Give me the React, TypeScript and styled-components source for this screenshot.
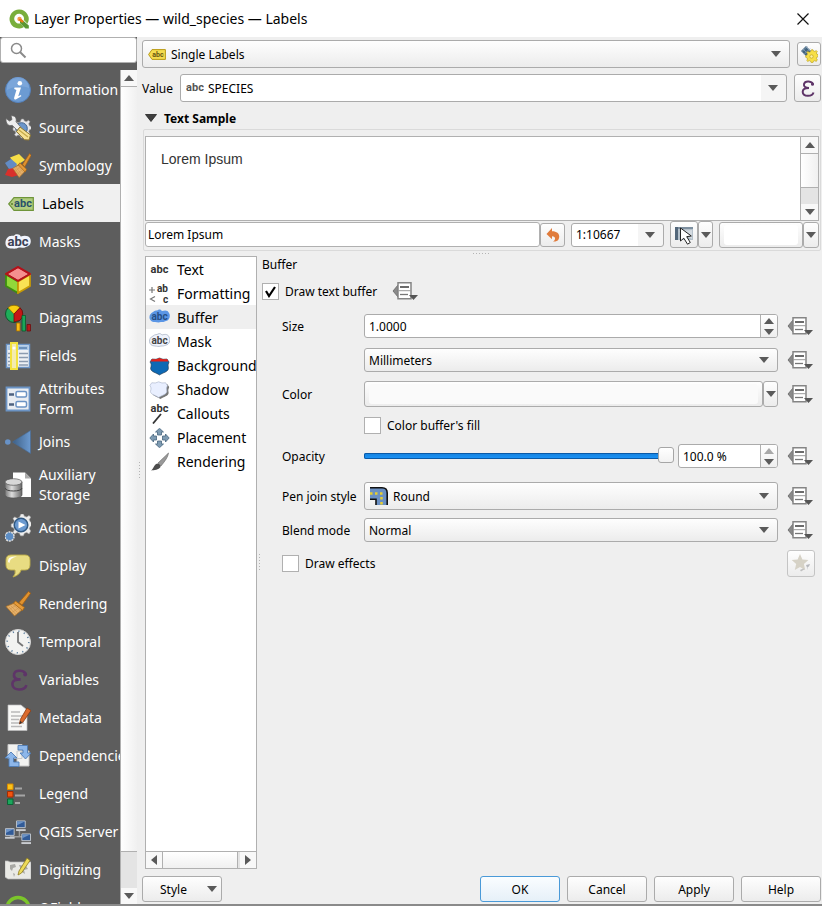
import React from "react";
import styled, { createGlobalStyle, css } from "styled-components";

const SEGOE = '"Segoe UI", "Noto Sans", "Open Sans", sans-serif';
const TAHOMA = 'Tahoma, "Noto Sans", "DejaVu Sans", sans-serif';
const LINE = "#b0b0b0";

const GlobalStyle = createGlobalStyle`
  *, *::before, *::after { box-sizing: border-box; }
  body { margin: 0; background: #efefef; font-family: ${TAHOMA}; font-size: 12px; color: #000; }
  button, input, select, textarea { font: inherit; color: inherit; margin: 0; }
  svg { display: block; flex: none; }
`;

/* ---------- surfaces ---------- */

const Window = styled.div`
  display: flex;
  flex-direction: column;
  height: 100vh;
  min-height: 640px;
  overflow: hidden;
  background: #efefef;
  border-bottom: 2px solid #8a8a8a;
`;

const TitleBar = styled.header`
  display: flex;
  align-items: center;
  gap: 5px;
  flex: none;
  height: 37px;
  padding: 0 10px 0 9px;
  background: #fff;
`;

const Title = styled.h1`
  flex: 1;
  margin: 0;
  font: 400 14px/20px ${SEGOE};
`;

const CloseButton = styled.button`
  display: flex;
  padding: 2px;
  border: 0;
  background: transparent;
`;

const Body = styled.div`
  display: grid;
  grid-template-columns: 137px 5px minmax(0, 1fr);
  flex: 1;
  min-height: 0;
`;

/* ---------- side bar ---------- */

const SideBar = styled.aside`
  display: flex;
  flex-direction: column;
  min-height: 0;
  background: #5d5d5d;
`;

const SearchBox = styled.label`
  display: flex;
  align-items: center;
  gap: 6px;
  flex: none;
  height: 26px;
  margin-bottom: 7px;
  padding-left: 9px;
  border: 1px solid ${LINE};
  border-radius: 3px;
  background: #fff;
`;

const SearchInput = styled.input`
  width: 100%;
  min-width: 0;
  padding: 0;
  border: 0;
  outline: 0;
  background: transparent;
`;

const SideBody = styled.div`
  display: grid;
  grid-template-columns: minmax(0, 1fr) 17px;
  flex: 1;
  min-height: 0;
`;

const SideList = styled.nav`
  overflow: hidden;
`;

const SideItem = styled.button<{ $active?: boolean; $tall?: boolean }>`
  display: flex;
  align-items: center;
  gap: 8px;
  width: 100%;
  height: ${(p) => (p.$tall ? 48 : 38)}px;
  padding: 1px 0 0 ${(p) => (p.$active ? 8 : 5)}px;
  border: 0;
  overflow: hidden;
  text-align: left;
  font: 400 14px/20px ${SEGOE};
  white-space: ${(p) => (p.$tall ? "normal" : "nowrap")};
  color: ${(p) => (p.$active ? "#000" : "#fff")};
  background: ${(p) => (p.$active ? "#f0f0f0" : "transparent")};
`;

/* ---------- scroll bars ---------- */

const ScrollV = styled.div`
  display: flex;
  flex-direction: column;
  min-height: 0;
  border-left: 1px solid ${LINE};
  background: #e4e4e4;
`;

const ScrollH = styled.div`
  display: flex;
  flex: none;
  height: 17px;
  border-top: 1px solid ${LINE};
  background: #e4e4e4;
`;

const ScrollButton = styled.button<{ $dir: "v" | "h" }>`
  display: grid;
  place-items: center;
  flex: none;
  width: ${(p) => (p.$dir === "h" ? "16px" : "100%")};
  height: 16px;
  padding: 0;
  border: 0;
  background: #f8f8f8;
`;

const HandleV = styled.div<{ $groove: number }>`
  flex: 1;
  margin-bottom: ${(p) => p.$groove}px;
  border: solid ${LINE};
  border-width: 1px 0;
  background: linear-gradient(90deg, #fff, #f0f0f0);
  box-shadow: 0 ${(p) => p.$groove}px 0 #e4e4e4, 0 ${(p) => p.$groove + 1}px 0 ${LINE};
`;

const HandleH = styled.div`
  flex: 1;
  margin-right: 2px;
  border: solid ${LINE};
  border-width: 0 1px;
  background: linear-gradient(#fff, #f0f0f0);
  box-shadow: 2px 0 0 #e4e4e4, 3px 0 0 ${LINE};
`;

/* ---------- generic controls ---------- */

const raised = css`
  border: 1px solid #ababab;
  border-radius: 3px;
  background: linear-gradient(#fefefe, #ececec);
`;

const ToolButton = styled.button<{ $w: number; $h: number; $faded?: boolean }>`
  ${raised}
  display: grid;
  place-items: center;
  flex: none;
  width: ${(p) => p.$w}px;
  height: ${(p) => p.$h}px;
  padding: 0;
  ${(p) => p.$faded && "border-color: #c4c4c4;"}
`;

const FlatButton = styled.button`
  display: flex;
  flex: none;
  padding: 0;
  border: 0;
  background: transparent;
`;

const PushButton = styled.button<{ $primary?: boolean }>`
  ${raised}
  display: flex;
  align-items: center;
  justify-content: center;
  width: 80px;
  height: 26px;
  padding: 0;
  ${(p) => p.$primary && "border-color: #4a9ad8; background: linear-gradient(#fafdff, #e6f0f8);"}
`;

const StyleButton = styled(PushButton)`
  justify-content: space-between;
  padding: 0 4px 0 17px;
`;

const ComboFrame = styled.div<{ $h: number; $editable?: boolean; $w?: number }>`
  ${raised}
  display: grid;
  grid-template-columns: auto minmax(0, 1fr) 27px;
  align-items: center;
  flex: ${(p) => (p.$w ? "none" : "1")};
  width: ${(p) => (p.$w ? p.$w + "px" : "auto")};
  min-width: 0;
  height: ${(p) => p.$h}px;
  ${(p) => p.$editable && "background: linear-gradient(90deg, #fff calc(100% - 25px), #f5f5f5 calc(100% - 25px));"}

  & > svg { grid-row: 1; pointer-events: none; }
  & > svg:first-child { grid-column: 1; margin-left: 5px; }
  & > svg:last-child { grid-column: 3; justify-self: center; }
`;

const ComboSelect = styled.select<{ $pad: number }>`
  grid-row: 1;
  grid-column: 1 / -1;
  appearance: none;
  width: 100%;
  height: 100%;
  padding: 0 27px 0 ${(p) => p.$pad}px;
  border: 0;
  outline: 0;
  background: transparent;
`;

const SpinFrame = styled.div<{ $w?: number }>`
  display: flex;
  flex: ${(p) => (p.$w ? "none" : "1")};
  width: ${(p) => (p.$w ? p.$w + "px" : "auto")};
  min-width: 0;
  height: 24px;
  border: 1px solid #ababab;
  border-radius: 3px;
  background: #fff;
  overflow: hidden;
`;

const SpinInput = styled.input`
  flex: 1;
  width: 0;
  min-width: 0;
  padding: 0 4px;
  border: 0;
  outline: 0;
  background: transparent;
`;

const SpinButtons = styled.div`
  display: flex;
  flex-direction: column;
  width: 17px;
  border-left: 1px solid ${LINE};
  background: linear-gradient(#fff, #eee);
`;

const SpinButton = styled.button`
  display: grid;
  place-items: center;
  flex: 1;
  padding: 0;
  border: 0;
  background: transparent;
`;

const ColorButton = styled.button<{ $w?: number; $h: number; $swatch: string }>`
  ${raised}
  flex: ${(p) => (p.$w ? "none" : "1")};
  width: ${(p) => (p.$w ? p.$w + "px" : "auto")};
  min-width: 0;
  height: ${(p) => p.$h}px;
  padding: 2px 4px;

  &::before {
    content: "";
    display: block;
    height: 100%;
    border-radius: 3px;
    background: ${(p) => p.$swatch};
  }
`;

const TickLabel = styled.label`
  display: flex;
  align-items: center;
  gap: 6px;
`;

const Tick = styled.span`
  display: grid;
  width: 17px;
  height: 17px;
  border: 1px solid ${LINE};
  background: #fff;

  & > * { grid-area: 1 / 1; place-self: center; }
  & > svg { pointer-events: none; visibility: hidden; }
  & > input:checked + svg { visibility: visible; }
`;

const TickInput = styled.input`
  appearance: none;
  width: 15px;
  height: 15px;
`;

const Slider = styled.input`
  appearance: none;
  flex: 1;
  min-width: 0;
  height: 18px;
  margin: 0;
  background: transparent;

  &::-webkit-slider-runnable-track {
    height: 6px;
    border-radius: 2px;
    background: linear-gradient(#1580dc, #1b95fa);
    box-shadow: inset 0 0 0 1px #0a5aa8;
  }
  &::-webkit-slider-thumb {
    appearance: none;
    width: 16px;
    height: 16px;
    margin-top: -6px;
    border: 1px solid #a6a6a6;
    border-radius: 3px;
    background: linear-gradient(#fff, #f2f2f2);
  }
`;

/* ---------- main column ---------- */

const Main = styled.main`
  display: flex;
  flex-direction: column;
  min-width: 0;
  min-height: 0;
  padding: 3px 1px 2px 0;
`;

const TopRow = styled.div`
  display: flex;
  align-items: center;
  gap: 7px;
  flex: none;
  margin-bottom: 6px;
`;

const ValueLabel = styled.label`
  flex: none;
  width: 31px;
`;

const SectionHead = styled.button`
  display: flex;
  align-items: center;
  gap: 7px;
  flex: none;
  height: 20px;
  padding: 0 0 0 3px;
  border: 0;
  background: transparent;
  font-weight: 700;
`;

const SampleGroup = styled.section`
  flex: none;
  margin: 1px 0 0 1px;
  padding: 6px 1px 2px 1px;
  border: 1px solid #dadada;
  border-radius: 2px;
`;

const Preview = styled.div`
  display: grid;
  grid-template-columns: minmax(0, 1fr) 18px;
  height: 85px;
  border: 1px solid ${LINE};
  background: #fff;
`;

const PreviewText = styled.p`
  margin: 0;
  padding: 12px 15px;
  font: 400 14px/20px "Liberation Sans", Arial, sans-serif;
  color: #333;
`;

const SampleRow = styled.div`
  display: flex;
  align-items: center;
  height: 27px;
`;

const SampleInput = styled.input`
  flex: 1;
  min-width: 0;
  height: 25px;
  padding: 0 2px;
  border: 1px solid ${LINE};
  border-radius: 3px;
  background: #fff;
  outline: 0;
`;

const Spacer = styled.span`
  flex: none;
  width: 6px;
`;

const DotsH = styled.div`
  align-self: center;
  flex: none;
  width: 17px;
  height: 1px;
  margin: 2px 0;
  background: repeating-linear-gradient(90deg, #b4b4b4 0 1px, transparent 1px 3px);
`;

const DotsV = styled.div`
  align-self: center;
  justify-self: center;
  width: 1px;
  height: 17px;
  background: repeating-linear-gradient(#b4b4b4 0 1px, transparent 1px 3px);
`;

const Split = styled.div`
  display: grid;
  grid-template-columns: 112px 5px minmax(0, 1fr);
  flex: 1;
  min-height: 0;
  margin-left: 3px;
`;

const TabPanel = styled.div`
  display: flex;
  flex-direction: column;
  min-height: 0;
  border: 1px solid ${LINE};
  background: #fff;
`;

const TabList = styled.nav`
  flex: 1;
  min-height: 0;
  overflow: hidden;
`;

const TabItem = styled.button<{ $active?: boolean }>`
  display: flex;
  align-items: center;
  gap: 7px;
  width: 100%;
  height: 24px;
  padding: 1px 0 0 3px;
  border: 0;
  overflow: hidden;
  white-space: nowrap;
  font: 400 14px/20px ${SEGOE};
  background: ${(p) => (p.$active ? "#efefef" : "transparent")};
`;

const Settings = styled.section`
  min-width: 0;
  padding-right: 3px;
`;

const SettingsTitle = styled.h2`
  margin: 0;
  font: 400 12px/17px ${TAHOMA};
`;

const EnableRow = styled.div`
  display: flex;
  align-items: center;
  gap: 15px;
  height: 36px;
`;

const Form = styled.div`
  display: grid;
  grid-template-columns: 82px minmax(0, 1fr) 31px;
  grid-template-rows: 34px 34px 34px 28px 34px 46px 22px 44px;
  align-items: center;
  padding-left: 20px;
`;

const FormLabel = styled.label`
  grid-column: 1;
  white-space: nowrap;
`;

const Field = styled.div`
  grid-column: 2;
  display: flex;
  align-items: center;
  gap: 4px;
  min-width: 0;
  padding-right: 9px;
`;

const ColorField = styled(Field)`
  gap: 0;
`;

const Across = styled.div`
  grid-column: 1 / 3;
`;

const Footer = styled.footer`
  display: flex;
  justify-content: space-between;
  flex: none;
  margin-top: 7px;
`;

const Actions = styled.div`
  display: flex;
  gap: 7px;
`;

/* ---------- small drawings ---------- */

type Dir = "up" | "down" | "left" | "right";
const arrowPaths: Record<Dir, string> = {
  up: "M0 6 5 0l5 6z",
  down: "M0 0h10L5 6z",
  left: "M6 0v10L0 5z",
  right: "M0 0v10l6-5z",
};
const Arrow = ({ dir = "down", faded }: { dir?: Dir; faded?: boolean }) => {
  const flat = dir === "up" || dir === "down";
  return (
    <svg width={flat ? 10 : 6} height={flat ? 6 : 10} aria-hidden>
      <path d={arrowPaths[dir]} fill={faded ? "#a8a8a8" : "#5a5a5a"} />
    </svg>
  );
};

const Icon = ({ w = 26, h = w, box, children }: { w?: number; h?: number; box?: string; children: React.ReactNode }) => (
  <svg width={w} height={h} viewBox={box ?? `0 0 ${w} ${h}`} aria-hidden>{children}</svg>
);

const SectionArrow = () => <Icon w={12} h={8}><path d="M.5.500h11L6 7.500z" fill="#3f3f3f" stroke="#222" strokeWidth=".8" /></Icon>;

const AbcText = ({ x, y, size, fill = "#333" }: { x: number; y: number; size: number; fill?: string }) => (
  <text x={x} y={y} fontSize={size} fontWeight="700" fill={fill} fontFamily="Roboto, 'Liberation Sans', sans-serif" textAnchor="middle">abc</text>
);

const Logo = () => (
  <Icon w={20}>
    <path d="M10 .5a9.500 9.500 0 1 0 5 17.600l-3.500-3.700a4.900 4.900 0 1 1 3.300-3.300l3.600 3.700A9.500 9.500 0 0 0 10 .5z" fill="#79ae3c" />
    <path d="M11 11h2.500l6.300 5.500V19.500h-3.300L11 14z" fill="#5a9632" />
    <circle cx="10.500" cy="10" r="2.200" fill="#f39a4c" />
    <path d="M10 10h2.500l2 2v1.500h-1.800L10 11.300z" fill="#ee7913" />
  </Icon>
);

const MagnifierIcon = () => (
  <Icon w={17}>
    <circle cx="6.500" cy="6.500" r="5" fill="none" stroke="#8a8a8a" strokeWidth="1.500" />
    <path d="m10 10 5.500 5.500" stroke="#8a8a8a" strokeWidth="2" />
  </Icon>
);

const gearTeeth = "M0-10h2l1 2 2 .6 2-1.300 1.500 1.500-1.300 2 .8 2 2 .8v2.400l-2 .8-.8 2 1.300 2L7 7.300 5 6 3 6.800 2 9h-2.400L-1.400 6.800-3.400 6l-2 1.300L-7 5.800l1.300-2L-6.500 2l-2-.8v-2.400l2-.8.8-2L-7-6l1.600-1.500 2 1.300 2-.8z";

const InfoIcon = () => (
  <Icon>
    <circle cx="13" cy="13" r="12.500" fill="#6c9bd2" stroke="#5582bd" />
    <path d="M2 11A11 11 0 0 1 24 11 18 12 0 0 0 2 13z" fill="#86aee0" opacity=".6" />
    <circle cx="14.800" cy="6.300" r="2.300" fill="#fff" />
    <path d="M9.500 10.500h6.500l-2.800 8.700 2.800-1.200.3 1.200-5.500 3.400c-1.500 0-2-.8-1.600-2.100l2.200-7.500-2.200-1z" fill="#fff" />
  </Icon>
);

const SourceIcon = () => (
  <Icon>
    <g transform="translate(16.500 14)"><path d={gearTeeth} fill="#e8e8ea" stroke="#999" strokeWidth=".6" /><circle r="5.800" cy="-.5" fill="#6b96cb" stroke="#42648e" /></g>
    <path d="M1 3.500 4.500 6 7 4.500 6 .8c4-.5 6 2.500 5 6l4.500 5-3.300 3.500-5-5C3.500 11.500.5 8.500 1 3.500z" fill="#eee" stroke="#666" strokeWidth=".8" />
    <path d="m11.500 16.500 3.500-4.500 10.500 8-1.500 5-4.500-.3z" fill="#f5e092" stroke="#8f7833" />
    <path d="m14 15 9 7" stroke="#c5a948" strokeWidth="1.300" />
  </Icon>
);

const BrushShape = () => (
  <>
    <path d="M9.500 12 1 15.500 9.500 25l8-6.500z" fill="#e5b06a" stroke="#a86e25" strokeWidth=".8" />
    <path d="m8 13.500 7 6M5.500 14.500l7 7M3.500 15.500l7.500 8M4.500 18.500l6-4M7 21.500l6.500-4.500" stroke="#cf9448" strokeWidth=".6" />
    <path d="m14 11.500 9.500-11 2.200 1.700-8.700 12z" fill="#df922f" stroke="#9e5c14" strokeWidth=".8" />
    <path d="m10.500 10 9 6.500-2 3-9-7.300z" fill="#e69a38" stroke="#a5630f" strokeWidth=".8" />
  </>
);

const SymbologyIcon = () => (
  <Icon>
    <path d="M5 4.500 14 1l6 6-9 6z" fill="#f6de48" />
    <path d="m0 10 6-4 6 5-3 6-5-1z" fill="#628bc4" />
    <path d="m0 22 3-6 6-1 5 7-7 2z" fill="#d9302b" />
    <g transform="translate(7 0) scale(.75 .98)"><BrushShape /></g>
  </Icon>
);

const LabelsIcon = () => (
  <Icon h={14}>
    <path d="M.7 7 6 .7h19.300v12.600H6z" fill="#b1cc7f" stroke="#6f953a" strokeWidth="1.200" />
    <circle cx="4" cy="7" r="1" fill="#5c7c30" />
    <AbcText x={15} y={10} size={11} fill="#29506a" />
  </Icon>
);

const MasksIcon = () => (
  <Icon w={26} h={18} box="0 0 28 18">
    <path d="M4 3c3-1 6 0 7-2 3-1 5 0 6 2 4-1 8-1 10 2 2 4 0 9-4 9-3 2-6 1-8 1-4 2-6 1-9 1C-1 16-1 6 4 3z" fill="#f1f4fd" />
    <AbcText x={14} y={13} size={14} fill="#3b4155" />
  </Icon>
);

const CubeIcon = () => (
  <Icon h={28}>
    <path d="m13 1 12 7-12 7L1 8z" fill="#f58f8f" stroke="#b4121b" strokeWidth="1.800" />
    <path d="m1 8.500 12 7V27L1 20z" fill="#92d83a" stroke="#3d8f10" strokeWidth="1.800" />
    <path d="m25 8.500-12 7V27l12-7z" fill="#f9e254" stroke="#c79a06" strokeWidth="1.800" />
    <path d="m13 1 12 7-12 7L1 8z" fill="none" stroke="#b4121b" strokeWidth="1.800" />
  </Icon>
);

const DiagramsIcon = () => (
  <Icon h={28}>
    <circle cx="9" cy="10" r="8.500" fill="#1fae5a" stroke="#10552d" />
    <path d="M9 10 3 3.700a8.500 8.500 0 0 1 12 0z" fill="#f8cf12" stroke="#9a6b05" strokeWidth=".8" />
    <path d="m9 10 6-6.300a8.500 8.500 0 0 1 0 12.600L9 18z" fill="#c51616" stroke="#6f0a0a" strokeWidth=".8" />
    <path d="M11.500 19h3.500v8h-3.500z" fill="#f9bb16" stroke="#a36e03" strokeWidth=".8" />
    <path d="M17 11.500h3.500V27H17z" fill="#1ba65a" stroke="#095c2b" strokeWidth=".8" />
    <path d="M22 20.500h3.500V27H22z" fill="#b61b1b" stroke="#6c0d0d" strokeWidth=".8" />
  </Icon>
);

const FieldsIcon = () => (
  <Icon h={28}>
    <path d="M1.500 2.500h23v23h-23z" fill="#eef1f5" stroke="#6b93c4" strokeWidth="1.500" />
    <path d="M2.500 3.500h21v4.500h-21z" fill="#a8c6e6" />
    <path d="M14 6h8" stroke="#5a80ae" strokeWidth="1.500" />
    <path d="M3 11.500h20M3 15.500h20M3 19.500h20M3 23h20" stroke="#8b9bb0" strokeWidth="1.300" strokeDasharray="9 2" />
    <path d="M6 1h6v26H6z" fill="#f3ebb0" stroke="#f3e23e" strokeWidth="2" />
    <circle cx="9" cy="6" r="1.600" fill="#fff" />
  </Icon>
);

const FormIcon = () => (
  <Icon>
    <path d="M1.500 1.500h23v23h-23z" fill="#e9edf2" stroke="#6b93c4" strokeWidth="1.800" />
    <rect x="11" y="5.500" width="10.500" height="5.500" rx="1.500" fill="#fff" stroke="#6b93c4" strokeWidth="1.500" />
    <rect x="11" y="15.500" width="10.500" height="5.500" rx="1.500" fill="#fff" stroke="#6b93c4" strokeWidth="1.500" />
    <path d="M4 8.500h5M4 18.500h5" stroke="#4d6280" strokeWidth="2.500" />
  </Icon>
);

const JoinsIcon = () => (
  <Icon w={26} box="0 0 26 26">
    <defs><linearGradient id="join"><stop offset="0" stopColor="#3d6086" /><stop offset="1" stopColor="#6c9ad0" /></linearGradient></defs>
    <circle cx="2.800" cy="13" r="2.800" fill="#6892c6" />
    <path d="M7.500 13 25.500 1.500v23z" fill="url(#join)" stroke="#446b99" strokeWidth=".6" />
  </Icon>
);

const StorageIcon = () => (
  <Icon h={28}>
    <defs><linearGradient id="cyl"><stop offset="0" stopColor="#777" /><stop offset=".4" stopColor="#ddd" /><stop offset="1" stopColor="#666" /></linearGradient></defs>
    <path d="M8 1.500h12l6 6V26H8z" fill="#fff" />
    <path d="m20 1.500 6 6h-6z" fill="#aaa" />
    <path d="M0 11v13c0 4 17 4 17 0V11z" fill="url(#cyl)" stroke="#555" strokeWidth=".7" />
    <ellipse cx="8.500" cy="11" rx="8.500" ry="3.300" fill="#d7d7d7" stroke="#555" strokeWidth=".7" />
    <path d="M0 17c0 4 17 4 17 0" fill="none" stroke="#444" />
  </Icon>
);

const ActionsIcon = () => (
  <Icon h={28}>
    <g transform="translate(16 11.500) scale(1.150)"><path d={gearTeeth} fill="#ededed" stroke="#aaa" strokeWidth=".5" /></g>
    <circle cx="16" cy="11" r="6.800" fill="#6a99d0" stroke="#315982" strokeWidth="1.500" />
    <path d="m13.500 7.500 7 3.500-7 3.500z" fill="#fff" />
    <circle cx="4.500" cy="22.500" r="4.500" fill="#5d8ec5" stroke="#ddd" strokeWidth="1.500" strokeDasharray="2 .8" />
  </Icon>
);

const DisplayIcon = () => (
  <Icon>
    <path d="M6 2h14q5 0 5 5v5q0 5-5 5h-4q-1 5-8 7 3-3 2-7H6q-5 0-5-5V7q0-5 5-5z" fill="#e8dc82" stroke="#bdad47" strokeWidth=".9" />
    <path d="M3 9c0-5 3-5.500 9-5.500C7 5 5 6 4.500 10z" fill="#fffdf0" />
  </Icon>
);

const RenderIcon = () => <Icon><BrushShape /></Icon>;

const ClockIcon = () => (
  <Icon>
    <circle cx="13" cy="13" r="12.500" fill="#f3f3f1" stroke="#d5d5d5" />
    <circle cx="13" cy="13" r="10.800" fill="none" stroke="#60819f" strokeWidth="1.600" strokeDasharray="1.200 4.455" />
    <path d="M13 3v10l5 4" fill="none" stroke="#777" strokeWidth="1.800" />
  </Icon>
);

const Epsilon = ({ big }: { big?: boolean }) => (
  <Icon w={big ? 26 : 14} h={big ? 26 : 17} box={big ? "-4 0 20 17" : "0 0 14 17"}>
    <path d="M12 4.500C11.500 1 4 0 3 4c-.6 3 2 4 5 4-4 0-6.500 1-6.300 4 .3 5 9.500 5 10.800.5" fill="none" stroke="#5e3468" strokeWidth="2" />
    <circle cx="11.500" cy="4.300" r="1.500" fill="#5e3468" />
  </Icon>
);

const MetadataIcon = () => (
  <Icon h={28}>
    <path d="M3 1h13l6 5v20.500H3z" fill="#f8f8f6" stroke="#bbb" strokeWidth=".7" />
    <path d="M6 8h9M6 12h12M6 15.500h8M6 19h13M6 22.500h11" stroke="#b9b9b9" strokeWidth="1.300" />
    <path d="M22 4 26 6.500 18 18l-3.500 2 .8-4.500z" fill="#db6b2d" stroke="#8d3b12" strokeWidth=".8" />
    <path d="m14.500 20 .6-3 2 1.300z" fill="#333" />
  </Icon>
);

const DependIcon = () => (
  <Icon>
    <path d="M3 1.500h14v14H3zM12 8h12v15H12z" fill="#f2f2f0" stroke="#c8c8c8" />
    <path d="M13 2.500h9.500V10H26l-5.500 6L15 10h3V7h-5z" fill="#8db7ea" stroke="#4f7db5" strokeWidth=".9" />
    <path d="M14 23.500H4V15H0l6-6 6 6H8.500v4H14z" fill="#8db7ea" stroke="#4f7db5" strokeWidth=".9" />
  </Icon>
);

const LegendIcon = () => (
  <Icon>
    <path d="M2.500 3h5.500v5.500H2.500z" fill="#f9c31b" stroke="#d98a00" />
    <path d="M2.500 10.500h5.500V16H2.500z" fill="#f1540f" stroke="#a72b00" />
    <path d="M2.500 18h5.500v5.500H2.500z" fill="#1ca65c" stroke="#0a6535" />
    <path d="M10 7.500h7M10 14.500h10M10 22h5" stroke="#a5a5a5" strokeWidth="2" />
  </Icon>
);

const Monitor = ({ x, y }: { x: number; y: number }) => (
  <g transform={`translate(${x} ${y})`}>
    <path d="M.5.500h9v7h-9z" fill="#315b98" stroke="#bfc6cd" />
    <path d="M1 1h8L1 5z" fill="#6e94c6" />
    <path d="M0 9h10v2H0z" fill="#c9ccd0" />
  </g>
);

const ServerIcon = () => (
  <Icon w={26} box="0 0 27 26">
    <path d="M15 11v7M5 18h18" stroke="#9e9e9e" strokeWidth="1.500" />
    <Monitor x={11.500} y={1} /><Monitor x={0} y={9} /><Monitor x={17} y={14.500} />
  </Icon>
);

const DigitizeIcon = () => (
  <Icon>
    <path d="M0 4h3l2 1h21v17H3l-3-2z" fill="#e9e9e5" stroke="#b8b8b8" strokeWidth=".7" />
    <path d="m5 8 5-1 1 3-3 1-1 3-2-2zM14 8l7 1 2 3-4 1 1 4-3-2zM8 16l2 1-1 3z" fill="#a8a8a4" />
    <path d="M22 1 25 3.500 16.500 16l-3.500 2 1-4z" fill="#eddb59" stroke="#8e7b1e" strokeWidth=".8" />
  </Icon>
);

const QFieldIcon = () => (
  <Icon>
    <circle cx="13" cy="13.500" r="11" fill="none" stroke="#7bc52a" strokeWidth="3.500" />
  </Icon>
);

const YellowLabelIcon = () => (
  <Icon w={18} h={11}>
    <path d="M.6 5.500 4 .6h13.400v9.800H4z" fill="#f4dc4f" stroke="#b89a16" />
    <AbcText x={10} y={8} size={7} fill="#665510" />
  </Icon>
);

const FieldTypeIcon = () => <Icon w={18} h={12}><AbcText x={9} y={9} size={11} fill="#555" /></Icon>;

const PlacementEngineIcon = () => (
  <Icon w={18}>
    <path d="m1 6 5-5 5 5-5 5z" fill="#42637e" />
    <path d="m3 4 5 5M5.500 1.500l5 5M1.500 7l6-6M4 9.500l6-6" stroke="#93abc0" strokeWidth=".7" />
    <g transform="translate(11.500 11.500) scale(.68)"><path d={gearTeeth} fill="#f7df47" stroke="#baa11a" /><circle r="2.500" fill="#fff3a1" stroke="#baa11a" /></g>
  </Icon>
);

const UndoIcon = () => (
  <Icon w={14}>
    <path d="M6 0v3.200c6.500 0 8.500 4 6.500 8.300-1 1.700-3 2.200-5.500 2 2.600-1.500 3.300-5-1-5.200v3L.5 6z" fill="#e07b3b" />
  </Icon>
);

const MapCursorIcon = () => (
  <Icon w={20}>
    <path d="M1 2h18v13H1z" fill="#b4c0ca" />
    <path d="M1 2h3v13H1z" fill="#53677a" /><path d="M4 2h15v2H4z" fill="#7d8f9f" />
    <path d="m5 6 13-1v9z" fill="#d3dae0" />
    <path d="M6.500 3v13l3.300-2.800 3.700 6 2.800-1.700-3.600-5.800 4.600-.7z" fill="#fff" stroke="#222" />
  </Icon>
);

const OverrideIcon = () => (
  <Icon w={26} h={20}>
    <path d="M1 10 6 4v12z" fill="#8a8a8a" stroke="#666" strokeWidth=".8" />
    <path d="M6 1.700h13v16H6z" fill="#fff" stroke="#858585" strokeWidth="1.500" />
    <path d="M8 6h9" stroke="#5b5b5b" strokeWidth="1.800" />
    <path d="M6 9.700h13" stroke="#999" />
    <path d="M8 13.500h8" stroke="#777" strokeWidth="1.300" />
    <path d="M17 14h9l-4.500 5z" fill="#555" />
  </Icon>
);

const RoundJoinIcon = () => (
  <Icon w={18}>
    <path d="M0 .8h12q5.200 0 5.200 5.200v12H6v-5.500H0z" fill="#6a90c3" />
    <path d="M0 .8h12q5.200 0 5.200 5.200v12M0 12.300h6V18" fill="none" stroke="#111" strokeWidth="1.600" />
    <path d="M0 6.500h13M11.500 10V18" fill="none" stroke="#e9d030" strokeWidth="2.500" strokeDasharray="2.500 2.500" />
  </Icon>
);

const StarIcon = () => (
  <Icon w={20}>
    <path d="m9 1 2.400 5.500 6 .5-4.500 4 1.300 6L9 14l-5.200 3 1.400-6L.7 7l5.900-.5z" fill="#d6d2c6" />
    <path d="m15 12 4-1-1 2.500-1.500.5.5 3z" fill="#b4b6bb" /><path d="m9 17 3-1.500 2 .5-4 2.500z" fill="#c0c0c0" />
  </Icon>
);

const CloseIcon = () => <Icon w={14}><path d="m1.500 1.500 11 11m0-11-11 11" stroke="#111" strokeWidth="1.200" /></Icon>;
const CheckIcon = () => <Icon w={13}><path d="m2 6 3 5 6-9" fill="none" stroke="#000" strokeWidth="2.200" /></Icon>;

/* icons of the label settings list, on a shared 21 by 20 grid */
const TabIcon = ({ children }: { children: React.ReactNode }) => <Icon w={21} h={20}>{children}</Icon>;
const cloud = "M4 4c2-2 4-1 5-2 2-1 3 0 4 1 3-1 6-1 7 2 2 3 0 8-3 8-2 1-3 1-5 1-3 1-4 0-6 0C-1 14-1 6 4 4z";
const shield = "M3 3q4 1 7.500-1Q14 4 18 3l2 3q-1.500 2.500-.6 6.500C19 16 14 16.500 10.500 19 7 16.500 2 16 1.600 12.500 2.500 8.500 2.500 8.500 1 6z";

const TextTabIcon = () => <TabIcon><AbcText x={10.500} y={13} size={11} /></TabIcon>;
const FormatTabIcon = () => (
  <TabIcon>
    <path d="M0 6h6M3 3v6M6 12.500 1.500 15 6 17.500" fill="none" stroke="#777" strokeWidth="1.200" />
    <text x="8" y="8" fontSize="10" fontWeight="700" fontFamily="Roboto" fill="#333">ab</text>
    <text x="14" y="19" fontSize="10" fontWeight="700" fontFamily="Roboto" fill="#333">c</text>
  </TabIcon>
);
const BufferTabIcon = () => <TabIcon><path d={cloud} fill="#5b96e5" /><AbcText x={10.500} y={12} size={10} fill="#264f86" /></TabIcon>;
const MaskTabIcon = () => <TabIcon><path d={cloud} fill="#eef2fb" stroke="#abb5c6" strokeWidth=".8" /><AbcText x={10.500} y={12} size={10} fill="#444" /></TabIcon>;
const BackgroundTabIcon = () => (
  <TabIcon>
    <path d={shield} fill="#0d69b5" stroke="#234" strokeWidth=".6" />
    <path d="M3 3q4 1 7.500-1Q14 4 18 3l1.500 2.500h-18z" fill="#e32119" />
  </TabIcon>
);
const ShadowTabIcon = () => (
  <TabIcon>
    <path d={shield} fill="#777" transform="translate(1.800 1.500) scale(.92)" />
    <path d={shield} fill="#e9efff" stroke="#a9b4cc" strokeWidth=".7" transform="scale(.92)" />
  </TabIcon>
);
const CalloutsTabIcon = () => <TabIcon><AbcText x={10.500} y={8} size={11} /><path d="M12 10 4 19.500" stroke="#333" strokeWidth="1.800" /></TabIcon>;
const PlacementTabIcon = () => (
  <TabIcon>
    {[0, 90, 180, 270].map((a) => (
      <path key={a} transform={`rotate(${a} 10.500 10)`} d="m10.500 .3 4 3.700h-2V7h-4V4h-2z" fill="#7e9bb2" stroke="#48667f" strokeWidth=".8" />
    ))}
  </TabIcon>
);
const RenderingTabIcon = () => (
  <TabIcon>
    <path d="M19.500 1 9 11l3 3C16 9 19 5 19.500 1z" fill="#999" stroke="#666" strokeWidth=".6" />
    <path d="M8.500 11.500c2 .5 3.500 2 3 3.500-2 3-6 3-9.500 3.500 3-2 2.500-6 6.500-7z" fill="#4d4d4d" />
  </TabIcon>
);

/* ---------- data ---------- */

const pages: { name: string; icon: React.FC; tall?: boolean }[] = [
  { name: "Information", icon: InfoIcon },
  { name: "Source", icon: SourceIcon },
  { name: "Symbology", icon: SymbologyIcon },
  { name: "Labels", icon: LabelsIcon },
  { name: "Masks", icon: MasksIcon },
  { name: "3D View", icon: CubeIcon },
  { name: "Diagrams", icon: DiagramsIcon },
  { name: "Fields", icon: FieldsIcon },
  { name: "Attributes Form", icon: FormIcon, tall: true },
  { name: "Joins", icon: JoinsIcon },
  { name: "Auxiliary Storage", icon: StorageIcon, tall: true },
  { name: "Actions", icon: ActionsIcon },
  { name: "Display", icon: DisplayIcon },
  { name: "Rendering", icon: RenderIcon },
  { name: "Temporal", icon: ClockIcon },
  { name: "Variables", icon: () => <Epsilon big /> },
  { name: "Metadata", icon: MetadataIcon },
  { name: "Dependencies", icon: DependIcon },
  { name: "Legend", icon: LegendIcon },
  { name: "QGIS Server", icon: ServerIcon },
  { name: "Digitizing", icon: DigitizeIcon },
  { name: "QField", icon: QFieldIcon },
];

const tabs: { name: string; icon: React.FC }[] = [
  { name: "Text", icon: TextTabIcon },
  { name: "Formatting", icon: FormatTabIcon },
  { name: "Buffer", icon: BufferTabIcon },
  { name: "Mask", icon: MaskTabIcon },
  { name: "Background", icon: BackgroundTabIcon },
  { name: "Shadow", icon: ShadowTabIcon },
  { name: "Callouts", icon: CalloutsTabIcon },
  { name: "Placement", icon: PlacementTabIcon },
  { name: "Rendering", icon: RenderingTabIcon },
];

/* ---------- composed controls ---------- */

const Combo = ({ id, value, label, h = 24, w, editable, icon, pad = 4 }: {
  id: string; value: string; label?: string; h?: number; w?: number; editable?: boolean; icon?: React.ReactNode; pad?: number;
}) => (
  <ComboFrame $h={h} $w={w} $editable={editable}>
    {icon}
    <ComboSelect id={id} aria-label={label} $pad={pad}><option>{value}</option></ComboSelect>
    <Arrow />
  </ComboFrame>
);

const Spin = ({ id, value, label, w, atMax }: { id: string; value: string; label?: string; w?: number; atMax?: boolean }) => (
  <SpinFrame $w={w}>
    <SpinInput id={id} aria-label={label} inputMode="decimal" defaultValue={value} />
    <SpinButtons>
      <SpinButton aria-label="Increase" disabled={atMax}><Arrow dir="up" faded={atMax} /></SpinButton>
      <SpinButton aria-label="Decrease"><Arrow /></SpinButton>
    </SpinButtons>
  </SpinFrame>
);

const Check = ({ children, checked }: { children: React.ReactNode; checked?: boolean }) => (
  <TickLabel>
    <Tick><TickInput type="checkbox" defaultChecked={checked} /><CheckIcon /></Tick>
    {children}
  </TickLabel>
);

const Override = () => <FlatButton aria-label="Data defined override"><OverrideIcon /></FlatButton>;

export default function App() {
  return (
    <Window>
      <GlobalStyle />
      <TitleBar>
        <Logo />
        <Title>Layer Properties — wild_species — Labels</Title>
        <CloseButton aria-label="Close"><CloseIcon /></CloseButton>
      </TitleBar>
      <Body>
        <SideBar>
          <SearchBox><MagnifierIcon /><SearchInput type="search" aria-label="Search" /></SearchBox>
          <SideBody>
            <SideList>
              {pages.map(({ name, icon: PageIcon, tall }) => (
                <SideItem key={name} $active={name === "Labels"} $tall={tall}><PageIcon />{name}</SideItem>
              ))}
            </SideList>
            <ScrollV>
              <ScrollButton $dir="v" aria-label="Scroll up"><Arrow dir="up" /></ScrollButton>
              <HandleV $groove={36} />
              <ScrollButton $dir="v" aria-label="Scroll down"><Arrow /></ScrollButton>
            </ScrollV>
          </SideBody>
        </SideBar>
        <DotsV />

        <Main>
          <TopRow>
            <Combo id="mode" label="Label mode" value="Single Labels" h={28} icon={<YellowLabelIcon />} pad={28} />
            <ToolButton $w={24} $h={24} aria-label="Automated placement settings"><PlacementEngineIcon /></ToolButton>
          </TopRow>
          <TopRow>
            <ValueLabel htmlFor="value">Value</ValueLabel>
            <Combo id="value" value="SPECIES" h={28} editable icon={<FieldTypeIcon />} pad={27} />
            <ToolButton $w={27} $h={28} aria-label="Expression"><Epsilon /></ToolButton>
          </TopRow>

          <SectionHead><SectionArrow />Text Sample</SectionHead>
          <SampleGroup>
            <Preview>
              <PreviewText>Lorem Ipsum</PreviewText>
              <ScrollV>
                <ScrollButton $dir="v" aria-label="Scroll up"><Arrow dir="up" /></ScrollButton>
                <HandleV $groove={16} />
                <ScrollButton $dir="v" aria-label="Scroll down"><Arrow /></ScrollButton>
              </ScrollV>
            </Preview>
            <SampleRow>
              <SampleInput aria-label="Sample text" defaultValue="Lorem Ipsum" />
              <ToolButton $w={25} $h={24} aria-label="Reset sample text"><UndoIcon /></ToolButton>
              <Spacer />
              <Combo id="scale" label="Scale" value="1:10667" w={93} editable />
              <Spacer />
              <ToolButton $w={28} $h={27} aria-label="Use map scale"><MapCursorIcon /></ToolButton>
              <ToolButton $w={15} $h={27} aria-label="Scale menu"><Arrow /></ToolButton>
              <Spacer />
              <ColorButton $w={84} $h={26} $swatch="#fff" aria-label="Preview background" />
              <ToolButton $w={16} $h={26} aria-label="Background menu"><Arrow /></ToolButton>
            </SampleRow>
          </SampleGroup>

          <DotsH />

          <Split>
            <TabPanel>
              <TabList>
                {tabs.map(({ name, icon: Glyph }) => (
                  <TabItem key={name} $active={name === "Buffer"}><Glyph />{name}</TabItem>
                ))}
              </TabList>
              <ScrollH>
                <ScrollButton $dir="h" aria-label="Scroll left"><Arrow dir="left" /></ScrollButton>
                <HandleH />
                <ScrollButton $dir="h" aria-label="Scroll right"><Arrow dir="right" /></ScrollButton>
              </ScrollH>
            </TabPanel>
            <DotsV />
            <Settings>
              <SettingsTitle>Buffer</SettingsTitle>
              <EnableRow><Check checked>Draw text buffer</Check><Override /></EnableRow>
              <Form>
                <FormLabel htmlFor="size">Size</FormLabel>
                <Field><Spin id="size" value="1.0000" /></Field>
                <Override />

                <Field><Combo id="unit" label="Unit" value="Millimeters" /></Field>
                <Override />

                <FormLabel htmlFor="color">Color</FormLabel>
                <ColorField>
                  <ColorButton id="color" $h={26} $swatch="#fafafa" />
                  <ToolButton $w={15} $h={26} aria-label="Color menu"><Arrow /></ToolButton>
                </ColorField>
                <Override />

                <Field><Check>Color buffer's fill</Check></Field>

                <FormLabel htmlFor="opacity">Opacity</FormLabel>
                <Field>
                  <Slider type="range" id="opacity" min={0} max={100} defaultValue={100} />
                  <Spin id="opacity-value" label="Opacity value" value="100.0 %" w={100} atMax />
                </Field>
                <Override />

                <FormLabel htmlFor="join">Pen join style</FormLabel>
                <Field><Combo id="join" value="Round" h={28} icon={<RoundJoinIcon />} pad={28} /></Field>
                <Override />

                <FormLabel htmlFor="blend">Blend mode</FormLabel>
                <Field><Combo id="blend" value="Normal" /></Field>
                <Override />

                <Across><Check>Draw effects</Check></Across>
                <ToolButton $w={28} $h={27} $faded disabled aria-label="Customize effects"><StarIcon /></ToolButton>
              </Form>
            </Settings>
          </Split>

          <Footer>
            <StyleButton>Style<Arrow /></StyleButton>
            <Actions>
              <PushButton $primary>OK</PushButton>
              <PushButton>Cancel</PushButton>
              <PushButton>Apply</PushButton>
              <PushButton>Help</PushButton>
            </Actions>
          </Footer>
        </Main>
      </Body>
    </Window>
  );
}
